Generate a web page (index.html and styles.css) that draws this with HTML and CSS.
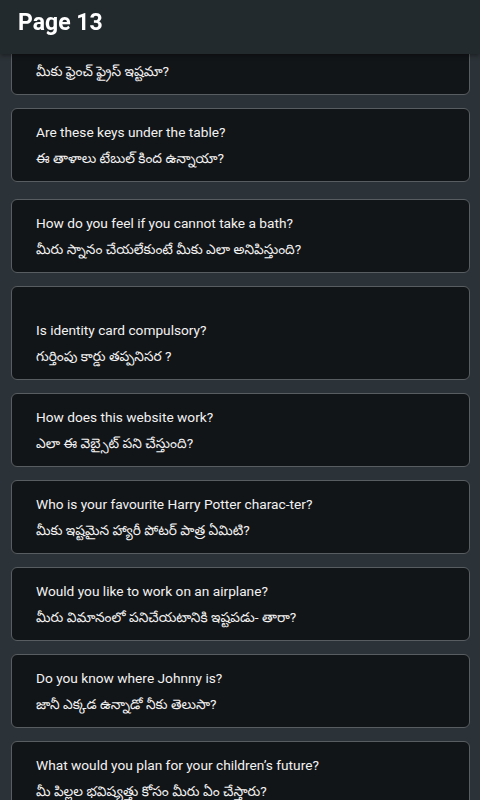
FILE: index.html
```html
<!DOCTYPE html>
<html lang="en">
<head>
<meta charset="utf-8">
<title>Page 13</title>
<link rel="stylesheet" href="styles.css">
</head>
<body>
<header class="appbar"><h1 class="title">Page 13</h1></header>
<main class="list">
  <div class="card">
    <p class="en">Do you like French fries?</p>
    <p class="te">మీకు ఫ్రెంచ్ ఫ్రైస్ ఇష్టమా?</p>
  </div>
  <div class="card card-wide-gap">
    <p class="en">Are these keys under the table?</p>
    <p class="te">ఈ తాళాలు టేబుల్ కింద ఉన్నాయా?</p>
  </div>
  <div class="card">
    <p class="en">How do you feel if you cannot take a bath?</p>
    <p class="te">మీరు స్నానం చేయలేకుంటే మీకు ఎలా అనిపిస్తుంది?</p>
  </div>
  <div class="card">
    <div class="blank"></div>
    <p class="en">Is identity card compulsory?</p>
    <p class="te">గుర్తింపు కార్డు తప్పనిసర ?</p>
  </div>
  <div class="card">
    <p class="en">How does this website work?</p>
    <p class="te">ఎలా ఈ వెబ్సైట్ పని చేస్తుంది?</p>
  </div>
  <div class="card">
    <p class="en">Who is your favourite Harry Potter charac-ter?</p>
    <p class="te">మీకు ఇష్టమైన హ్యారీ పోటర్ పాత్ర ఏమిటి?</p>
  </div>
  <div class="card">
    <p class="en">Would you like to work on an airplane?</p>
    <p class="te">మీరు విమానంలో పనిచేయటానికి ఇష్టపడు- తారా?</p>
  </div>
  <div class="card">
    <p class="en">Do you know where Johnny is?</p>
    <p class="te">జానీ ఎక్కడ ఉన్నాడో నీకు తెలుసా?</p>
  </div>
  <div class="card">
    <p class="en">What would you plan for your children’s future?</p>
    <p class="te">మీ పిల్లల భవిష్యత్తు కోసం మీరు ఏం చేస్తారు?</p>
  </div>
</main>
</body>
</html>
```

FILE: styles.css
```css
html, body {
  margin: 0;
  padding: 0;
}
body {
  width: 480px;
  height: 800px;
  overflow: hidden;
  background: #2c3338;
  font-family: Roboto, "Noto Sans Telugu", "Noto Sans", sans-serif;
  color: #f2f2f2;
}
.appbar {
  position: fixed;
  top: 0;
  left: 0;
  right: 0;
  height: 54px;
  box-sizing: border-box;
  background: #232a2d;
  box-shadow: 0 2px 4px rgba(0, 0, 0, 0.35);
  display: flex;
  align-items: flex-start;
  padding: 11px 0 0 18px;
  z-index: 2;
}
.title {
  margin: 0;
  font-size: 23px;
  font-weight: 700;
  color: #ffffff;
  line-height: 1;
}
.list {
  padding: 21px 10px 0 11px;
  display: flex;
  flex-direction: column;
  gap: 13px;
}
.card {
  background: #121518;
  border: 1px solid #585d61;
  border-radius: 6px;
  padding: 10px 24px 10px 24px;
}
.card-wide-gap {
  margin-bottom: 4px;
}
.blank {
  height: 20px;
}
.en, .te {
  margin: 0;
  font-size: 13.7px;
  line-height: 26px;
  white-space: nowrap;
}
.te {
  font-size: 13.7px;
}
```
